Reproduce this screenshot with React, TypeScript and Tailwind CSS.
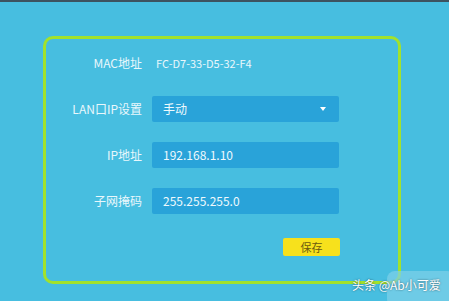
import React from "react";

const rows = [
  { label: "LAN口IP设置", value: "手动", select: true },
  { label: "IP地址", value: "192.168.1.10" },
  { label: "子网掩码", value: "255.255.255.0" },
];

const App = () => {
  return (
    <div
      className="relative w-[449px] h-[301px] overflow-hidden bg-[#47bee0] border-t-2 border-[#3d5360]"
      style={{ fontFamily: '"Noto Sans CJK SC", "Noto Sans", sans-serif' }}
    >
      <div className="ml-[43px] mt-[34px] w-[358px] h-[248px] border-[3px] border-[#a2e22c] rounded-[10px] pt-[11px] flex flex-col">
        <div className="flex items-center h-[26px]">
          <span className="w-[96px] text-right text-[12px] text-[#e9f7fc]">MAC地址</span>
          <span className="ml-[14px] text-[11px] text-[#e9f7fc]">FC-D7-33-D5-32-F4</span>
        </div>
        {rows.map((row) => (
          <div key={row.label} className="flex items-center h-[26px] mt-[20px]">
            <span className="w-[96px] text-right text-[12px] text-[#e9f7fc]">{row.label}</span>
            <div className="ml-[10px] w-[187px] h-[26px] bg-[#29a3d9] rounded-[2px] flex items-center justify-between pl-[11px] pr-[13px]">
              <span className="text-[12px] text-[#eef9fd]">{row.value}</span>
              {row.select && (
                <span className="w-0 h-0 border-l-[3px] border-r-[3px] border-t-[4px] border-l-transparent border-r-transparent border-t-white" />
              )}
            </div>
          </div>
        ))}
        <div className="flex justify-end w-[294px] mt-[24px]">
          <button className="w-[57px] h-[18px] bg-[#f7e11c] rounded-[2px] text-[11px] leading-none text-[#6b5a10]">
            保存
          </button>
        </div>
      </div>
      <div className="absolute right-[-6px] bottom-[-6px] w-[68px] h-[36px] rounded-[8px] bg-[#7fd0e8] opacity-70" />
      <span
        className="absolute left-[352px] top-[277px] whitespace-nowrap text-[12px] leading-none text-white"
        style={{ textShadow: "0 0 2px rgba(0,0,0,0.6)" }}
      >
        头条 @Ab小可爱
      </span>
    </div>
  );
};

export default App;
